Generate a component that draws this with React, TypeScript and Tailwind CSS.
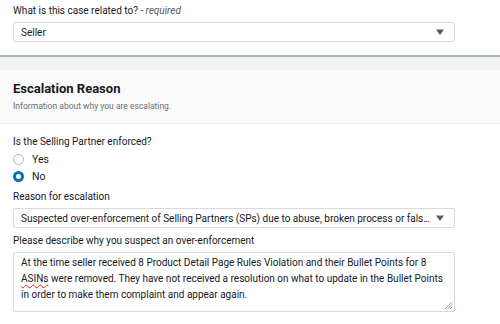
import React, { useState } from 'react';

const Caret = () => (
  <svg width="8" height="6" viewBox="0 0 8 6" className="shrink-0">
    <path d="M0 0.5h8L4 6z" fill="#545b64" />
  </svg>
);

const Radio = ({ checked, label, onClick }: { checked: boolean; label: string; onClick: () => void }) => (
  <button onClick={onClick} className="flex items-center gap-[8px] h-[17px] text-left">
    {checked ? (
      <span className="w-[11px] h-[11px] rounded-full border-[3.5px] border-[#0073bb] bg-white shrink-0" />
    ) : (
      <span className="w-[11px] h-[11px] rounded-full border border-[#aab7b8] bg-white shrink-0" />
    )}
    <span className="text-[10.5px] text-[#16191f]">{label}</span>
  </button>
);

export default function App() {
  const [enforced, setEnforced] = useState<'yes' | 'no'>('no');

  return (
    <div className="w-[500px] h-[324px] overflow-hidden bg-white text-[#16191f]" style={{ fontFamily: 'Roboto, "Noto Sans", sans-serif' }}>
      {/* Case relation */}
      <div className="px-[13px] pt-[3px] pb-[13px]">
        <div className="text-[10px] leading-[16px] mb-[3px]">
          What is this case related to? <span className="italic text-[#545b64]">- required</span>
        </div>
        <div className="w-[442px] h-[20px] border border-[#d5dbdb] rounded-[2px] flex items-center justify-between pl-[7px] pr-[10px] text-[10px]">
          <span>Seller</span>
          <Caret />
        </div>
      </div>

      <div className="h-[2px] bg-[#aab7b8]" />
      <div className="h-[13px] bg-[#f2f3f3]" />

      {/* Section header */}
      <div className="bg-[#fafafa] px-[13px] pt-[10px] h-[54px] border-b border-[#eaeded]">
        <div className="text-[13px] font-bold leading-[18px]">Escalation Reason</div>
        <div className="text-[8.5px] text-[#687078] leading-[14px] mt-[1px]">Information about why you are escalating.</div>
      </div>

      <div className="px-[13px] pt-[10px]">
        <div className="text-[10px] leading-[16px] mb-[1px]">Is the Selling Partner enforced?</div>
        <div className="flex flex-col">
          <Radio checked={enforced === 'yes'} label="Yes" onClick={() => setEnforced('yes')} />
          <Radio checked={enforced === 'no'} label="No" onClick={() => setEnforced('no')} />
        </div>

        <div className="text-[10px] leading-[16px] mt-[4px] mb-[3px]">Reason for escalation</div>
        <div className="w-[442px] h-[20px] border border-[#d5dbdb] rounded-[2px] flex items-center gap-[5px] pl-[7px] pr-[10px] text-[10px]">
          <span className="flex-1 truncate">Suspected over-enforcement of Selling Partners (SPs) due to abuse, broken process or false positive</span>
          <Caret />
        </div>

        <div className="text-[10px] leading-[16px] mt-[5px] mb-[3px]">Please describe why you suspect an over-enforcement</div>
        <div className="relative w-[442px] h-[60px] border border-[#d5dbdb] rounded-[2px] px-[7px] pt-[2px] text-[10px] leading-[16px]">
          At the time seller received 8 Product Detail Page Rules Violation and their Bullet Points for 8{' '}
          <span className="underline decoration-wavy decoration-[#d13212] underline-offset-2">ASINs</span> were removed. They have not received a resolution on what to update in the Bullet Points in order to make them complaint and appear again.
          <svg width="9" height="9" viewBox="0 0 9 9" className="absolute right-[1px] bottom-[1px]">
            <path d="M8 1L1 8M8 3.5L3.5 8M8 6L6 8" stroke="#879596" strokeWidth="0.9" />
          </svg>
        </div>
      </div>
    </div>
  );
}
